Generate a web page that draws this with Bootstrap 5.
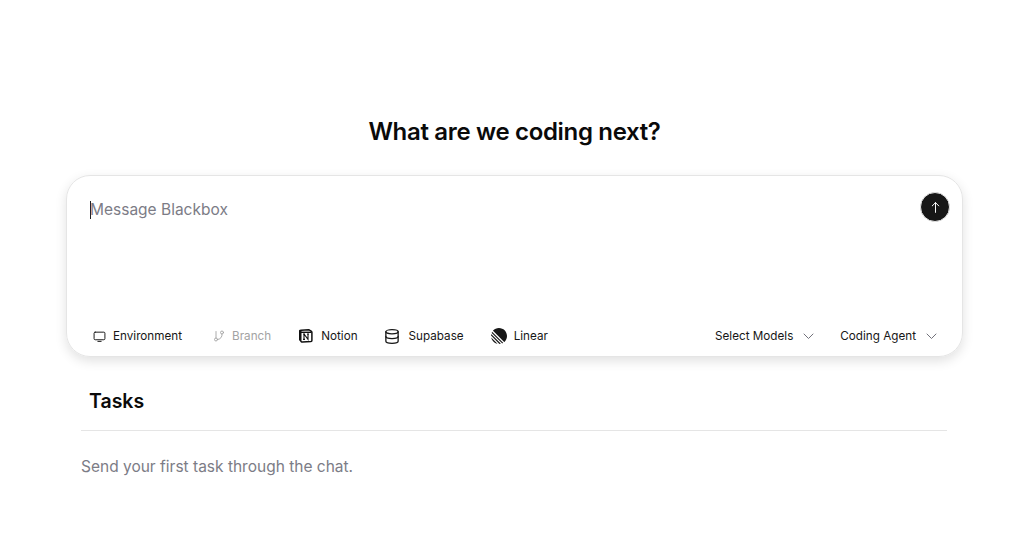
<!DOCTYPE html>
<html lang="en">
<head>
  <meta charset="UTF-8">
  <title>Blackbox</title>
  <link href="https://cdn.jsdelivr.net/npm/bootstrap@5.3.2/dist/css/bootstrap.min.css" rel="stylesheet">
  <style>
    body { font-family: Inter, sans-serif; color: #0a0a0a; background: #fff; }
    .page-wrap { width: 897px; margin-left: 66px; padding-top: 118px; }
    .headline { font-size: 24px; line-height: 28px; font-weight: 600; letter-spacing: -.33px; margin: 0 0 29px; text-align: center; }
    .composer { height: 182px; border: 1px solid #e5e5e5; border-radius: 24px; box-shadow: 0 4px 12px rgba(0,0,0,.12); padding: 16px 12px 12px 23px; }
    .prompt { font-size: 15.5px; line-height: 24px; color: #7c7c86; box-shadow: inset 1px 0 0 #222; height: 18px; margin-top: 9px; display: flex; align-items: center; }
    .send-btn { width: 30px; height: 30px; background: #171717; border: 1px solid #e5e5e5; border-radius: 50%; }
    .tool-btn { font-size: 11.7px; line-height: 16px; font-weight: 400; gap: 7px; color: #171717; }
    .tool-btn.off { color: #a3a3a3; }
    .tools { gap: 27px; padding-left: 3px; }
    .tools-right { gap: 26px; padding-right: 13px; }
    .gap-notion { gap: 8px; }
    .gap-wide { gap: 10px; }
    .after-env { margin-right: 4px; }
    .after-branch { margin-right: 1px; }
    .tasks-title { font-size: 19.5px; line-height: 28px; font-weight: 600; padding: 30px 0 15px 23px; margin: 0; }
    .tasks-body { margin: 0 16px 0 15px; border-top: 1px solid #e5e5e5; padding-top: 26px; color: #7c7c86; }
    .tasks-body p { margin: 0; font-size: 15.5px; line-height: 20px; }
  </style>
</head>
<body>
  <div class="page-wrap">
    <h1 class="headline">What are we coding next?</h1>
    <div class="composer d-flex flex-column justify-content-between">
      <div class="d-flex justify-content-between align-items-start">
        <div class="prompt">Message Blackbox</div>
        <div class="send-btn d-flex align-items-center justify-content-center">
          <svg width="13" height="13" viewBox="0 0 24 24" fill="none" stroke="#fff" stroke-width="1.800" stroke-linecap="round" stroke-linejoin="round"><path d="M12 21V3M6 9l6-6 6 6"/></svg>
        </div>
      </div>
      <div class="d-flex justify-content-between align-items-center">
        <div class="tools d-flex align-items-center">
          <div class="tool-btn after-env d-flex align-items-center">
            <svg width="13" height="13" viewBox="0 0 24 24" fill="none" stroke="currentColor" stroke-width="1.800" stroke-linecap="round" stroke-linejoin="round"><rect x="2" y="4" width="20" height="14" rx="2"/><path d="M9 21h6"/></svg>
            Environment
          </div>
          <div class="tool-btn off after-branch d-flex align-items-center">
            <svg width="12" height="12" viewBox="0 0 24 24" fill="none" stroke="currentColor" stroke-width="1.800" stroke-linecap="round" stroke-linejoin="round"><circle cx="6" cy="19" r="3"/><circle cx="18" cy="5" r="3"/><path d="M6 16V3M18 8a9 9 0 0 1-9 11"/></svg>
            Branch
          </div>
          <div class="tool-btn gap-notion d-flex align-items-center">
            <svg width="14" height="14" viewBox="0 0 14 14"><path d="M2.200 1.300 9.600.8c.7 0 1 .2 1.400.5l1.400 1c.4.300.5.500.5.900v8.300c0 .7-.3 1-1 1.100l-8.500.5c-.5 0-.8-.1-1.100-.4l-1.300-1.800c-.3-.4-.4-.7-.4-1.100V2.300c0-.5.3-.9 1.600-1Z" fill="#fff" stroke="#111" stroke-width="1.500"/><path d="M1.500 3.300h11" stroke="#111" stroke-width="1.400"/><path d="M1.500 1.500v10" stroke="#111" stroke-width="2"/><path d="M5 5v5.400M5 5l4 5.400V5M4 5h2M8 5h2M4 10.400h2" stroke="#111" stroke-width="1.100" fill="none"/></svg>
            Notion
          </div>
          <div class="tool-btn gap-wide d-flex align-items-center">
            <svg width="14" height="15" viewBox="2 1 20 22" fill="none" stroke="currentColor" stroke-width="1.900" stroke-linecap="round" stroke-linejoin="round"><ellipse cx="12" cy="5" rx="9" ry="3"/><path d="M3 5v14a9 3 0 0 0 18 0V5"/><path d="M3 12a9 3 0 0 0 18 0"/></svg>
            Supabase
          </div>
          <div class="tool-btn d-flex align-items-center">
            <svg width="16" height="16" viewBox="0 0 100 100" fill="#171717"><path d="M1.200 61.500c-.2-.9.800-1.400 1.400-.8l36.700 36.700c.6.600.1 1.600-.8 1.400C20.100 94.400 5.600 79.900 1.200 61.500Z"/><path d="M0 46.900c0 .3.100.5.300.7l52.100 52.100c.2.200.4.300.7.300 2.400-.1 4.700-.5 7-.9.800-.2 1-1.100.5-1.700L2.600 39.400c-.6-.6-1.500-.3-1.700.5-.4 2.300-.8 4.600-.9 7Z"/><path d="M4.200 29.700c-.2.300-.1.800.2 1.100l64.800 64.800c.3.300.7.400 1.100.2 1.800-.8 3.500-1.700 5.100-2.700.6-.3.600-1.100.2-1.500L8.400 24.400c-.5-.5-1.200-.4-1.500.2-1 1.600-1.900 3.300-2.700 5.100Z"/><path d="M12.700 17.700c-.3-.4-.4-1 0-1.400C21.800 6.300 35.100 0 49.800 0 77.500 0 100 22.500 100 50.200c0 14.700-6.300 28-16.300 37.100-.4.400-1 .3-1.400 0L12.700 17.700Z"/></svg>
            Linear
          </div>
        </div>
        <div class="tools-right d-flex align-items-center">
          <div class="tool-btn gap-wide d-flex align-items-center">
            Select Models
            <svg width="11" height="7" viewBox="0 0 11 7" fill="none" stroke="#71717a" stroke-width="1" stroke-linecap="round" stroke-linejoin="round"><path d="m1 1 4.500 4.500L10 1"/></svg>
          </div>
          <div class="tool-btn gap-wide d-flex align-items-center">
            Coding Agent
            <svg width="11" height="7" viewBox="0 0 11 7" fill="none" stroke="#71717a" stroke-width="1" stroke-linecap="round" stroke-linejoin="round"><path d="m1 1 4.500 4.500L10 1"/></svg>
          </div>
        </div>
      </div>
    </div>
    <h2 class="tasks-title">Tasks</h2>
    <div class="tasks-body"><p>Send your first task through the chat.</p></div>
  </div>
</body>
</html>
